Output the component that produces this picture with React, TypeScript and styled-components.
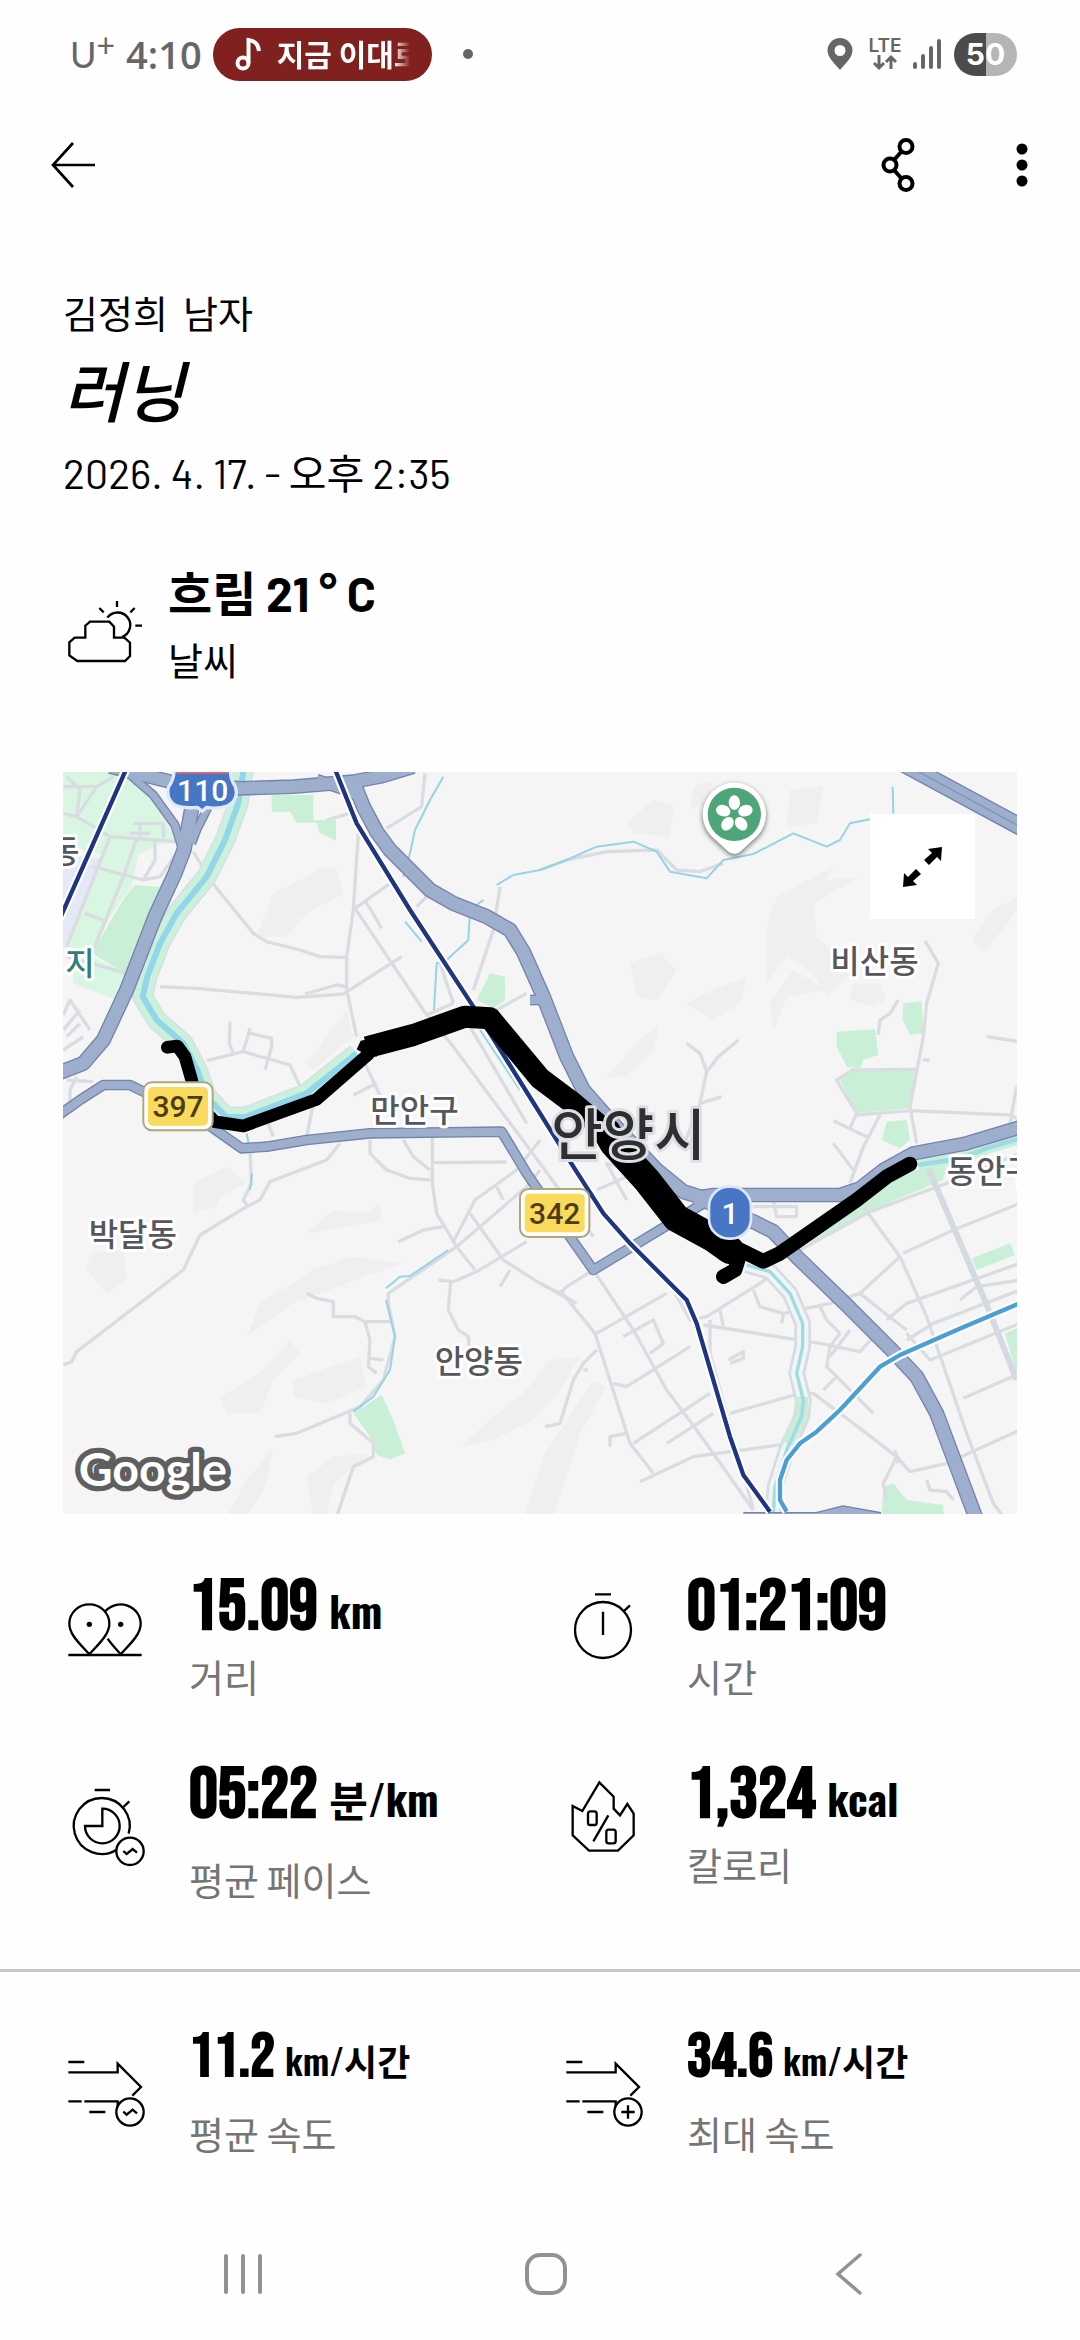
import React from "react";
import styled, { createGlobalStyle } from "styled-components";

const korean = `"Noto Sans CJK KR", sans-serif`;
const body = `"Barlow", "Roboto", ${korean}`;
const display = `"Oswald", "Roboto Condensed", "Open Sans Condensed", ${korean}`;
const digits = `"Bebas Neue", ${display}`;

const GlobalStyle = createGlobalStyle`
  *, *::before, *::after { box-sizing: border-box; }
  body { margin: 0; background: #fefefe; color: #000; }
  h1, p, dl, dt, dd { margin: 0; font: inherit; }
  button { border: 0; padding: 0; background: none; color: inherit; cursor: pointer; }
  svg { display: block; overflow: visible; }
`;

const Page = styled.div`
  display: flex;
  flex-direction: column;
  min-height: 100vh;
  font-family: ${body};
`;

/* ---------- status bar ---------- */

const StatusBar = styled.div`
  display: flex;
  align-items: center;
  justify-content: space-between;
  height: 108px;
  padding: 0 63px 0 70px;
  color: #666;
  font-family: "Open Sans", ${korean};
`;

const StatusGroup = styled.div<{ $gap: number }>`
  display: flex;
  align-items: center;
  gap: ${p => p.$gap}px;
`;

const Carrier = styled.span`
  display: flex;
  font: 400 36px/54px "Lato", ${korean};
  sup { font-size: 32px; line-height: 36px; }
`;

const Clock = styled.time`
  font-size: 38px;
  line-height: 54px;
  font-weight: 600;
`;

const NowPlaying = styled.div`
  display: flex;
  align-items: center;
  gap: 16px;
  width: 219px;
  height: 53px;
  padding: 0 22px;
  border-radius: 27px;
  background: #80201f;
  color: #fff;
`;

const Marquee = styled.span`
  flex: 1;
  overflow: hidden;
  padding-bottom: 3px;
  white-space: nowrap;
  font: 700 30px/44px ${korean};
  mask-image: linear-gradient(to right, #000 88%, transparent);
`;

const Dot = styled.span`
  width: 10px;
  height: 10px;
  margin-left: 20px;
  border-radius: 50%;
  background: #666;
`;

const Battery = styled.span`
  display: grid;
  place-items: center;
  width: 63px;
  height: 43px;
  border-radius: 22px;
  background: linear-gradient(to right, #4b4b4b 50%, #b5b5b5 50%);
  color: #fff;
  font: 700 30px/43px "Inter", ${korean};
`;

/* ---------- app bar ---------- */

const AppBar = styled.nav`
  display: flex;
  align-items: center;
  justify-content: space-between;
  height: 114px;
  padding: 0 16px 0 31px;
`;

const Actions = styled.div`
  display: flex;
  gap: 40px;
`;

const IconButton = styled.button`
  display: grid;
  place-items: center;
  width: 84px;
  height: 84px;
`;

/* ---------- summary ---------- */

const Header = styled.header`
  padding: 64px 63px 0;
  font-size: 38px;
  line-height: 54px;
`;

const Athlete = styled.p`
  white-space: pre;
`;

const Title = styled.h1`
  padding-bottom: 10px;
  font: italic 500 66px/96px ${korean};
`;

const DateLine = styled.p`
  font-size: 41px;
`;

const Weather = styled.section`
  display: flex;
  gap: 21px;
  padding: 63px 63px 0;
`;

const WeatherText = styled.dl`
  display: flex;
  flex-direction: column-reverse;
  gap: 10px;
`;

const WeatherValue = styled.dd`
  font-size: 48px;
  line-height: 60px;
  font-weight: 700;
`;

const WeatherLabel = styled.dt`
  font-size: 38px;
  line-height: 54px;
`;

const Icon = styled.svg`
  flex: none;
  width: 84px;
  height: 84px;
  margin-top: 21px;
  fill: none;
  stroke: #000;
  stroke-width: 7;
`;

/* ---------- map ---------- */

const MapCard = styled.section`
  position: relative;
  margin: 85px 63px 0;
`;

const MapDrawing = styled.svg`
  && { overflow: hidden; }
  width: 100%;
  height: auto;
  background: #f5f5f5;
  stroke-linejoin: round;
`;

const Place = styled.text<{ $park?: boolean }>`
  font: 500 96px ${korean};
  fill: ${p => (p.$park ? "#2f8178" : "#56575b")};
  stroke: #fff;
  stroke-width: 18px;
  paint-order: stroke;
`;

const City = styled(Place)`
  font-size: 168px;
  fill: #2d2f33;
  stroke: #dedfe2;
`;

const RoadNumber = styled.text`
  font: 500 90px "Roboto", sans-serif;
  text-anchor: middle;
`;

const Attribution = styled.text`
  font: 700 140px "Lato", "Inter", sans-serif;
  fill: #fff;
  stroke: #5f5f5f;
  stroke-width: 32px;
  paint-order: stroke;
`;

const Pin = styled.g`
  filter: drop-shadow(0 6px 8px rgba(0, 0, 0, 0.55));
`;

const ExpandButton = styled(IconButton)`
  position: absolute;
  top: 42px;
  right: 42px;
  width: 105px;
  height: 105px;
  background: #fff;
`;

/* ---------- stats ---------- */

const Stats = styled.dl`
  && { margin: 54px 0 0; }
  display: grid;
  grid-template-columns: 1fr 1fr;
  gap: 52px 42px;
  padding: 0 63px;
`;

const Speeds = styled(Stats)`
  && { margin-top: 62px; }
  padding-top: 52px;
  border-top: 3px solid #c6c5cd;
`;

const Stat = styled.div`
  display: flex;
  gap: 42px;
`;

const StatText = styled.div<{ $gap: number }>`
  display: flex;
  flex-direction: column-reverse;
  justify-content: flex-end;
  gap: ${p => p.$gap}px;
`;

const Value = styled.dd<{ $small?: boolean }>`
  height: ${p => (p.$small ? 60 : 72)}px;
  font-family: ${digits};
  font-size: ${p => (p.$small ? 62 : 72)}px;
  line-height: ${p => (p.$small ? 68 : 80)}px;
  font-weight: 700;
  white-space: nowrap;
`;

const Unit = styled.span<{ $small?: boolean }>`
  font-family: ${display};
  font-size: ${p => (p.$small ? 36 : 42)}px;
  line-height: 1;
  font-weight: ${p => (p.$small ? 600 : 700)};
`;

const Label = styled.dt`
  color: #757575;
  font-size: 38px;
  line-height: 54px;
`;

/* ---------- system navigation ---------- */

const SystemNav = styled.nav`
  display: grid;
  grid-template-columns: repeat(3, 1fr);
  height: 132px;
  margin-top: auto;
  padding: 0 80px 0 92px;
  color: #929292;
`;

const NavButton = styled.button`
  display: grid;
  place-items: center;
`;

const greens = [
  "9,6 190,6 240,30 300,90 345,165 350,215 290,225 235,255 215,350 190,380 150,440 95,550 60,540 20,530 60,430 130,250 100,250 9,220",
  "40,600 90,560 210,612 170,690 40,640",
  "635,75 760,75 760,150 828,150 828,212 780,190 770,158 710,158 690,125 635,125",
  "1250,690 1290,610 1335,620 1335,690 1300,715",
  "2330,785 2445,778 2455,855 2410,870 2400,895 2360,890 2330,830",
  "2530,700 2585,693 2590,790 2550,795 2528,750",
  "2340,930 2380,900 2570,900 2550,1015 2390,1030",
  "2480,1055 2540,1050 2550,1110 2520,1135 2465,1110",
  "880,1930 965,1875 1000,1950 1035,2050 990,2068 950,2055 930,2000",
  "2470,2150 2500,2140 2540,2190 2650,2205 2650,2240 2465,2240",
  "2735,1465 2850,1420 2865,1455 2750,1500",
  "2835,1690 2880,1670 2880,1850",
  "2240,1410 2390,1310 2480,1240 2570,1200 2660,1190 2650,1230 2420,1325 2250,1420",
  "2470,1100 2520,1135 2500,1120",
];

const hills = [
  "640,370 720,330 790,290 830,300 850,370 740,430 680,500 590,500",
  "400,1240 500,1190 560,1240 480,1280 470,1310 400,1330",
  "90,1450 190,1440 200,1530 140,1570 80,1500",
  "820,1320 920,1330 960,1300 965,1350 860,1370 740,1390",
  "600,1600 760,1500 880,1460 1030,1480 860,1540 700,1600 560,1700",
  "480,1880 600,1810 690,1710 720,1750 640,1830 600,1930 500,1930",
  "700,1830 900,1760 920,1850 800,1900 700,1880",
  "640,2030 560,2130 500,2240 560,2240 620,2140",
  "760,2240 740,2120 820,2060 930,2050 820,2140 800,2240",
  "1200,2030 1300,1940 1400,1860 1470,1770 1560,1760 1500,1860 1420,1950 1300,2010",
  "1600,1830 1640,1850 1560,1990 1480,2240 1390,2240 1450,2060",
  "1700,160 1780,90 1840,110 1830,200 1720,190",
  "1900,50 1960,30 1940,100 1890,120",
  "2190,60 2290,50 2270,160 2180,170",
  "2150,380 2320,290 2300,330 2400,320 2260,400 2270,500 2380,600 2300,680 2260,610 2180,560 2120,640 2120,470",
  "2380,640 2460,640 2480,690 2440,710 2370,690",
  "1880,700 1960,660 2060,620 2040,700 1960,750",
  "2200,600 2130,700 2140,780 2180,680 2300,660",
  "1640,920 1740,810 1800,760 1780,840 1700,920",
  "1710,580 1800,550 1850,600 1790,690 1730,680",
  "2740,500 2800,420 2870,380 2870,420 2780,540 2740,520",
  "740,880 860,720 880,800 760,900",
];

const minorRoads = [
  "10,50 110,50 160,20", "110,50 50,140 10,130", "50,140 150,200 350,215", "50,140 60,60 20,20", "150,200 20,530", "100,290 250,330 300,320 350,250",
  "220,160 310,160 310,205", "210,190 270,190", "240,160 240,210", "285,215 285,270 250,330", "75,430 130,450", "20,560 200,610", "230,205 190,320 100,540",
  "400,245 450,330 580,490 620,515 720,540 780,560 860,562", "300,650 410,655 580,670 710,682 850,672 1025,560", "735,672 830,645 860,650", "895,190 880,420 860,560 860,660 890,800",
  "885,415 990,340", "885,415 1090,720 1180,830 1440,1180 1600,1400", "915,390 965,475", "1095,10 1085,110 980,175", "800,150 870,130", "1320,350 1300,480 1240,660", "1100,380 1070,410", "440,872 550,845 690,885 735,980", "510,755 508,820 520,850", "550,845 570,775", "570,790 635,805 635,830 615,900",
  "10,735 30,690 90,780", "10,780 60,720", "20,800 60,760", "10,840 70,800", "20,930 100,935", "50,920 30,960 30,1010", "910,870 990,1040", "880,975 950,940", "850,900 760,1000 740,1100", "620,1050 640,1100",
  "840,1120 800,1170 630,1235 600,1290 560,1310 420,1395 370,1500 50,1745 35,1775 10,1785", "570,1140 575,1240 550,1290 565,1310",
  "930,1110 930,1150 980,1200 1050,1225 1110,1230", "1030,1110 1060,1160 1110,1200", "1117,1100 1117,1240 1130,1330 1190,1430 1245,1500", "1120,1178 1340,1176", "1015,1415 1090,1380 1150,1370", "1190,1430 1400,1250 1440,1200", "1180,1415 1245,1290 1370,1200 1440,1110", "1230,1330 1330,1470 1440,1540 1550,1600", "1310,1250 1330,1290", "1135,1530 1180,1535 1250,1505 1400,1415", "1350,1500 1320,1550", "1190,1430 985,1570 985,1600 1005,1700 970,1830 900,1910 710,1990 645,2000", "1172,1535 1165,1620 1195,1680 1225,1700 1228,1740", "740,1570 770,1585 820,1595 820,1640 885,1640 915,1655 990,1655", "915,1655 930,1710 925,1790 950,1810", "930,1765 970,1770", "870,1930 870,1960 940,2020 940,2060 880,2090 830,2240",
  "1440,1540 1500,1570 1520,1550 1600,1500", "1500,1560 1605,1690 1710,2020 1780,2110", "1600,1500 1720,1680 1820,1860 1910,1980 2080,2220", "1610,1690 1820,1570", "1690,1700 1780,1650 1810,1720 1770,1750", "1660,1840 1700,1850 1890,1730", "1610,1740 1570,1780 1540,1830 1500,1960 1455,1970", "1570,1800 1585,1800", "1720,2020 1950,1870", "1820,2020 1960,1930", "1740,2135 1900,2060 2050,2040 2190,2020", "1700,1990 1650,2000 1650,2030",
  "1700,1290 1640,1180 1760,1210", "1610,1260 1700,1220", "1840,1560 1890,1650 1940,1640 2100,1540 2140,1510", "1930,1665 2280,1720 2400,1745 2460,1680", "1950,1650 1950,1750 2080,2220", "1980,1620 1990,1670", "2010,1930 2220,1870 2260,1870 2420,1990 2510,2060 2550,2105 2660,2080 2880,1980",
  "2080,1560 2100,1610 2170,1630 2310,1600 2400,1570", "2170,1630 2165,1660", "2280,1610 2300,1650 2340,1690", "2400,1570 2500,1650 2540,1680", "2340,1690 2310,1730 2300,1790 2440,1930", "2290,1860 2330,1820", "2370,1680 2310,1760", "2510,2060 2470,2140 2480,2190", "2505,2040 2515,2080",
  "2220,1440 2430,1325 2660,1240 2880,1150", "2410,1310 2520,1460 2600,1640 2720,1990 2800,2200 2830,2240", "2530,1450 2680,1380 2880,1300", "2480,1650 2540,1600 2880,1480", "2400,1570 2520,1460", "2540,1710 2620,1660 2880,1560", "2540,1690 2610,1770 2880,1660", "2710,1885 2880,1810", "2700,1590 2750,1550 2880,1530", "2580,1140 2760,1550",
  "1880,820 1920,850 1940,905 1920,1000 1870,1130", "1940,905 1975,860 2035,810", "1920,1000 1985,980", "2595,512 2635,580 2600,700 2590,800 2550,1010 2570,1120", "2515,690 2490,730 2460,750 2455,795", "2370,905 2330,930 2390,1030 2370,1075", "2370,900 2570,898", "2390,1035 2550,1022 2850,1035 2870,1045", "2320,1052 2420,1100", "2460,1035 2410,1130 2370,1240", "2320,1120 2380,1200", "2590,868 2610,872", "2780,800 2880,815", "2870,950 2850,1060 2845,1110", "1440,300 1520,270 1640,245 1790,240 1850,300 1920,305 1990,280",
  "2080,1310 2210,1310 2210,1340 2150,1340 2140,1290", "2600,2130 2610,2160 2660,2165 2680,2190", "2005,1770 2050,1745 2050,1765 2010,1780", "1140,580 1180,700", "1230,770 1400,1060", "1180,700 1100,735", "1310,720 1400,670",
];

const streams = [
  "1150,20 1110,90 1065,180 1050,250 1030,320", "1270,390 1230,420 1225,510 1160,570 1130,580 1122,720", "1035,455 1085,515", "1310,345 1360,315 1440,300 1520,270 1610,230 1720,215 1790,245 1830,305 1940,325 1990,270 2080,252 2200,190 2300,230 2340,210 2370,160 2430,148", "2498,50 2500,130",
  "1165,1440 1050,1518 1020,1520 978,1555", "978,1590 1005,1700 990,1800 940,1880 880,1925", "560,1090 570,1140", "575,1210 570,1260", "1260,780 1380,960",
];

const highways = [
  { w: 20, d: "205,10 280,75 345,165 368,240" },
  { w: 20, d: "450,100 410,180 395,220" },
  { w: 36, d: "150,-10 330,35 540,55 700,50 880,35 960,20 1060,-10" },
  { w: 30, d: "770,30 860,60 900,80" },
  { w: 38, d: "400,90 372,240 345,310 285,440 200,660 130,810 70,880 -20,915" },
  { w: 24, d: "-10,1040 60,990 130,945 210,945 260,970 360,1010 460,1075 545,1135 620,1130 740,1110 930,1090 1325,1085 1400,1210 1530,1400 1600,1500 1840,1355 1930,1300" },
  { w: 38, d: "880,35 910,110 950,185 990,240 1110,360 1180,400 1280,440 1350,480 1390,545 1450,680 1520,860 1570,960 1640,1040 1790,1200 1870,1265 1950,1290" },
  { w: 36, d: "1900,1285 1960,1275 2340,1275 2400,1255 2470,1200 2560,1150 2720,1120 2880,1072" },
  { w: 38, d: "1930,1290 2080,1355 2140,1385 2210,1460 2360,1605 2490,1735 2570,1820 2630,1930 2690,2090 2750,2250" },
  { w: 46, d: "2520,-25 2890,175" },
  { w: 24, d: "1450,690 1410,690" },
  { w: 30, d: "2050,2245 2270,2245 2350,2225 2460,2245" },
];

const riverA = "552,-10 535,100 495,210 440,320 350,430 300,520 262,620 248,680 290,750 370,820 412,900 440,980 500,1042 560,1040 740,970 890,850";
const riverB = "2060,1485 2130,1505 2190,1570 2228,1660 2228,1730 2210,1810 2230,1890 2225,1940 2180,2040 2145,2150 2140,2230";
const railA = "202,-10 0,445";
const railB = "822,-10 890,160 1050,420 1240,710 1340,870 1540,1190 1630,1330 1710,1420 1880,1590 1910,1660 1960,1830 2010,2000 2050,2115 2130,2225";
const subway = "2180,2225 2160,2190 2160,2130 2180,2070 2220,2020 2270,1985 2340,1920 2460,1790 2520,1755 2690,1680 2890,1595";
const routeThin = "322,832 352,828 375,860 395,930 410,1000 465,1055 550,1068 770,988 925,853";
const routeThick = "920,832 1060,795 1215,740 1290,745 1440,925 1540,1000 1640,1085";
const routeHeavy = "1640,1085 1660,1120 1760,1230 1850,1345 1960,1405 2010,1440";
const routeEnd = "2000,1420 2110,1474 2160,1450 2390,1290 2480,1220 2550,1182";
const routeTail = "1990,1450 2035,1468 2025,1500 1990,1520";

const Line = ({ d, w, c, cap = "butt" }: { d: string; w: number; c: string; cap?: "butt" | "round" }) => (
  <polyline points={d} fill="none" stroke={c} strokeWidth={w} strokeLinecap={cap} />
);

const PlateYellow = ({ x, y, n }: { x: number; y: number; n: string }) => (
  <g>
    <rect x={x} y={y} width={208} height={144} rx={26} fill="#fff" stroke="#aca77e" strokeWidth={6} />
    <rect x={x + 14} y={y + 14} width={180} height={116} rx={14} fill="#f9da5c" />
    <RoadNumber x={x + 104} y={y + 105} fill="#4d3d14">{n}</RoadNumber>
  </g>
);

const RouteMap = () => (
  <MapDrawing viewBox="9 6 2862 2226" role="img" aria-label="러닝 경로">
    {hills.map(p => <polygon key={p} points={p} fill="#efefef" />)}
    {greens.map((p, i) => <polygon key={p} points={p} fill={i < 2 ? "#d8f6e1" : "#c9f0d7"} />)}
    <polygon points="195,380 225,345 300,350 225,590 200,612 95,550" fill="#c9efd6" />
    <polygon points="9,250 120,265 20,530 9,540" fill="#e5e9f5" />
    {minorRoads.map(d => <Line key={d} d={d} w={10} c="#d9dde1" />)}
    <Line d="2590,1160 2770,1580 2870,1830" w={18} c="#d5dae0" />
    <Line d={riverA} w={62} c="#d9dde1" />
    <Line d={riverA} w={54} c="#c9f1dc" />
    <Line d={riverA} w={18} c="#93d5e9" />
    <Line d={riverB} w={50} c="#d7dbdf" />
    <Line d={riverB} w={34} c="#eff5f6" />
    <Line d="2225,1880 2225,1940 2180,2020" w={38} c="#c9ecd9" />
    <Line d={riverB} w={10} c="#a0dbe2" />
    <Line d="2575,1185 2700,1165 2780,1135 2880,1105" w={34} c="#c9f0dd" />
    <Line d="2575,1185 2700,1165 2780,1135 2880,1105" w={14} c="#9fdce2" />
    {streams.map(d => <Line key={d} d={d} w={6} c="#98d2e6" />)}
    {highways.map(h => <Line key={h.d} d={h.d} w={h.w + 8} c="#7484ab" />)}
    {highways.map(h => <Line key={h.d} d={h.d} w={h.w} c="#9eaecd" />)}
    <Line d="2520,-25 2890,175" w={4} c="#8293b8" />
    <Line d={railA} w={26} c="#fff" />
    <Line d={railA} w={13} c="#20357f" />
    <Line d={railB} w={26} c="#fff" />
    <Line d={railB} w={13} c="#20357f" />
    <Line d={subway} w={26} c="#fff" />
    <Line d={subway} w={13} c="#4b9fd2" />

    <Line d={routeThin} w={38} c="#000" cap="round" />
    <Line d={routeThick} w={66} c="#000" />
    <Line d={routeHeavy} w={84} c="#000" cap="round" />
    <Line d={routeEnd} w={44} c="#000" cap="round" />
    <Line d={routeTail} w={44} c="#000" cap="round" />
    <polygon points="890,838 902,812 960,800 950,860 910,850" />

    <path d="M340 -20H512Q506 20 526 50Q538 90 502 108Q470 118 440 112L427 124L412 112Q370 116 346 106Q316 86 326 50Q348 20 340 -20Z" fill="#4676c4" stroke="#e3e9f8" strokeWidth={10} />
    <path d="M350 0H505V12H350Z" fill="#cf6a6e" />
    <RoadNumber x={428} y={92} fill="#fff">110</RoadNumber>
    <PlateYellow x={250} y={937} n="397" />
    <PlateYellow x={1380} y={1257} n="342" />
    <rect x={1947} y={1250} width={126} height={156} rx={60} fill="#4676c4" stroke="#dce6f8" strokeWidth={8} />
    <RoadNumber x={2010} y={1362} fill="#fff">1</RoadNumber>

    <Pin>
      <path d="M2023 252Q2012 252 2002 242L1954 198A95 95 0 1 1 2092 198L2044 242Q2034 252 2023 252Z" fill="#fff" />
    </Pin>
    <circle cx={2023} cy={133} r={80} fill="#4ea678" />
    {[0, 72, 144, 216, 288].map(a => (
      <ellipse key={a} cx={2023} cy={98} rx={17} ry={22} fill="#fff" transform={`rotate(${a} 2023 133)`} />
    ))}

    <Place x={-30} y={278}>동</Place>
    <Place x={16} y={614} $park>지</Place>
    <Place x={2311} y={609}>비산동</Place>
    <Place x={931} y={1057}>만안구</Place>
    <Place x={86} y={1427}>박달동</Place>
    <Place x={1124} y={1808}>안양동</Place>
    <Place x={2660} y={1240}>동안구</Place>
    <City x={1474} y={1155}>안양시</City>
    <Attribution x={56} y={2149}>Google</Attribution>
  </MapDrawing>
);

const AvgBadge = ({ cx, cy }: { cx: number; cy: number }) => (
  <>
    <circle cx={cx} cy={cy} r={41} fill="#fefefe" />
    <path d={`M${cx - 20} ${cy - 1}L${cx - 10} ${cy + 8}L${cx + 8} ${cy - 7}L${cx + 21} ${cy + 4}`} />
  </>
);

const SpeedArrow = ({ x }: { x: number }) => (
  <path d={`M${x} 336h48M${x} 367h148v-26l70 70l-26 26M${x} 454h40M${x + 48} 454h100v20M${x + 63} 486h48`} />
);

export default function App() {
  return (
    <Page>
      <GlobalStyle />
      <StatusBar>
        <StatusGroup $gap={11}>
          <Carrier>U<sup>+</sup></Carrier>
          <Clock>4:10</Clock>
          <NowPlaying>
            <svg width="26" height="34" viewBox="0 0 26 34" fill="none" stroke="#fff" strokeWidth="4">
              <circle cx="8" cy="26" r="5.500" />
              <path d="M13.500 26V3Q23 4 24 14" />
            </svg>
            <Marquee>지금 이대로</Marquee>
          </NowPlaying>
          <Dot />
        </StatusGroup>
        <StatusGroup $gap={13}>
          <svg width="26" height="32" viewBox="0 0 26 32" fill="#666" fillRule="evenodd">
            <path d="M13 0A12.500 12.500 0 0 1 25.500 12.500C25.500 20 16 28 13 32C10 28 .5 20 .5 12.500A12.500 12.500 0 0 1 13 0ZM13 7a5.500 5.500 0 1 0 0 11a5.500 5.500 0 0 0 0-11Z" />
          </svg>
          <svg width="34" height="34" viewBox="0 0 34 34" fill="none" stroke="#666" strokeWidth="3">
            <text x="19" y="15" textAnchor="middle" fill="#666" stroke="none" fontFamily="Inter, sans-serif" fontWeight="600" fontSize="19">LTE</text>
            <path d="M13 18V31M8 26l5 5l5-5M25 32V20M20 25l5-5l5 5" />
          </svg>
          <svg width="28" height="30" viewBox="0 0 28 30" stroke="#666" strokeWidth="4" strokeLinecap="round">
            <path d="M2 25V28M10 17V28M18 9V28M26 2V28" />
          </svg>
          <Battery>50</Battery>
        </StatusGroup>
      </StatusBar>

      <AppBar>
        <IconButton aria-label="뒤로">
          <svg width="44" height="46" viewBox="0 0 44 46" fill="none" stroke="#000" strokeWidth="2.700">
            <path d="M44 23H2M22 1L2 23L22 45" />
          </svg>
        </IconButton>
        <Actions>
          <IconButton aria-label="공유">
            <svg width="34" height="54" viewBox="0 0 34 54" fill="none" stroke="#000" strokeWidth="4">
              <circle cx="25" cy="8.500" r="6.500" /><circle cx="9" cy="27" r="6.500" /><circle cx="25" cy="45.500" r="6.500" />
              <path d="M13 22L20.500 13.500M13 32L20.500 40.500" />
            </svg>
          </IconButton>
          <IconButton aria-label="더보기">
            <svg width="12" height="44" viewBox="0 0 12 44">
              <circle cx="6" cy="6" r="5.500" /><circle cx="6" cy="22" r="5.500" /><circle cx="6" cy="38" r="5.500" />
            </svg>
          </IconButton>
        </Actions>
      </AppBar>

      <Header>
        <Athlete>김정희  남자</Athlete>
        <Title>러닝</Title>
        <DateLine>2026. 4. 17. - 오후 2:35</DateLine>
      </Header>

      <Weather>
        <Icon viewBox="69 942 252 252">
          <path d="M88 1117L104 1103H136V1067L150 1055H208L222 1070V1103H253L270 1118V1158L255 1173H112L88 1156Z" />
          <path d="M202 1043A38 38 0 1 1 246 1101" />
          <path d="M231 993v18M178 1014l13 13M284 1014l-13 13M286 1067h20" />
        </Icon>
        <WeatherText>
          <WeatherLabel>날씨</WeatherLabel>
          <WeatherValue>흐림 21 ° C</WeatherValue>
        </WeatherText>
      </Weather>

      <MapCard>
        <RouteMap />
        <ExpandButton aria-label="지도 확대">
          <svg width="40" height="40" viewBox="0 0 40 40">
            <path d="M39 0L38 14L34 10L26 18L21 13L29 6L25 2Z" />
            <path d="M0 40L1 26L5 30L13 22L18 27L10 34L14 38Z" />
          </svg>
        </ExpandButton>
      </MapCard>

      <Stats>
        <Stat>
          <Icon viewBox="69 117 252 252">
            <path d="M85 315H305" />
            <path d="M148 313C125 286 88 256 88 221A60 58 0 0 1 208 221C208 256 171 286 148 313Z" />
            <path d="M196 184A60 58 0 0 1 302 221C302 256 265 286 242 313C229 298 215 284 203 266" />
            <circle cx="148" cy="223" r="8" fill="#000" stroke="none" /><circle cx="242" cy="223" r="8" fill="#000" stroke="none" />
          </Icon>
          <StatText $gap={10}>
            <Label>거리</Label>
            <Value>15.09 <Unit>km</Unit></Value>
          </StatText>
        </Stat>
        <Stat>
          <Icon viewBox="63 117 252 252">
            <circle cx="189" cy="240" r="84" />
            <path d="M165 133h48M189 185v70M251 184l19-18" />
          </Icon>
          <StatText $gap={10}>
            <Label>시간</Label>
            <Value>01:21:09</Value>
          </StatText>
        </Stat>
        <Stat>
          <Icon viewBox="69 681 252 252">
            <path d="M266 851A84 84 0 1 0 230 899" />
            <path d="M164 720h46M250 771l18-17M187 776V828H135A52 52 0 1 0 187 776Z" />
            <AvgBadge cx={270} cy={904} />
          </Icon>
          <StatText $gap={25}>
            <Label>평균 페이스</Label>
            <Value>05:22 <Unit>분/km</Unit></Value>
          </StatText>
        </Stat>
        <Stat>
          <Icon viewBox="63 681 252 252">
            <path d="M98 768L127 783L178 697L221 740V776L240 796L262 762L281 791V856L234 902H147L98 856Z" />
            <path d="M205 796L160 874" />
            <rect x="144" y="784" width="26" height="41" rx="7" /><rect x="199" y="839" width="28" height="41" rx="7" />
          </Icon>
          <StatText $gap={10}>
            <Label>칼로리</Label>
            <Value>1,324 <Unit>kcal</Unit></Value>
          </StatText>
        </Stat>
      </Stats>

      <Speeds>
        <Stat>
          <Icon viewBox="69 285 252 252">
            <SpeedArrow x={85} />
            <AvgBadge cx={270} cy={486} />
          </Icon>
          <StatText $gap={23}>
            <Label>평균 속도</Label>
            <Value $small>11.2 <Unit $small>km/시간</Unit></Value>
          </StatText>
        </Stat>
        <Stat>
          <Icon viewBox="63 285 252 252">
            <SpeedArrow x={79} />
            <circle cx="264" cy="486" r="41" fill="#fefefe" />
            <path d="M244 486h40M264 466v40" />
          </Icon>
          <StatText $gap={23}>
            <Label>최대 속도</Label>
            <Value $small>34.6 <Unit $small>km/시간</Unit></Value>
          </StatText>
        </Stat>
      </Speeds>

      <SystemNav>
        <NavButton aria-label="최근 앱">
          <svg width="38" height="40" viewBox="0 0 38 40" stroke="currentColor" strokeWidth="4" strokeLinecap="round">
            <path d="M2 2V38M19 2V38M36 2V38" />
          </svg>
        </NavButton>
        <NavButton aria-label="홈">
          <svg width="42" height="42" viewBox="0 0 42 42" fill="none" stroke="currentColor" strokeWidth="4">
            <rect x="2" y="2" width="38" height="38" rx="13" />
          </svg>
        </NavButton>
        <NavButton aria-label="이전">
          <svg width="26" height="42" viewBox="0 0 26 42" fill="none" stroke="currentColor" strokeWidth="3.500" strokeLinecap="round">
            <path d="M24 2L2 21L24 40" />
          </svg>
        </NavButton>
      </SystemNav>
    </Page>
  );
}
